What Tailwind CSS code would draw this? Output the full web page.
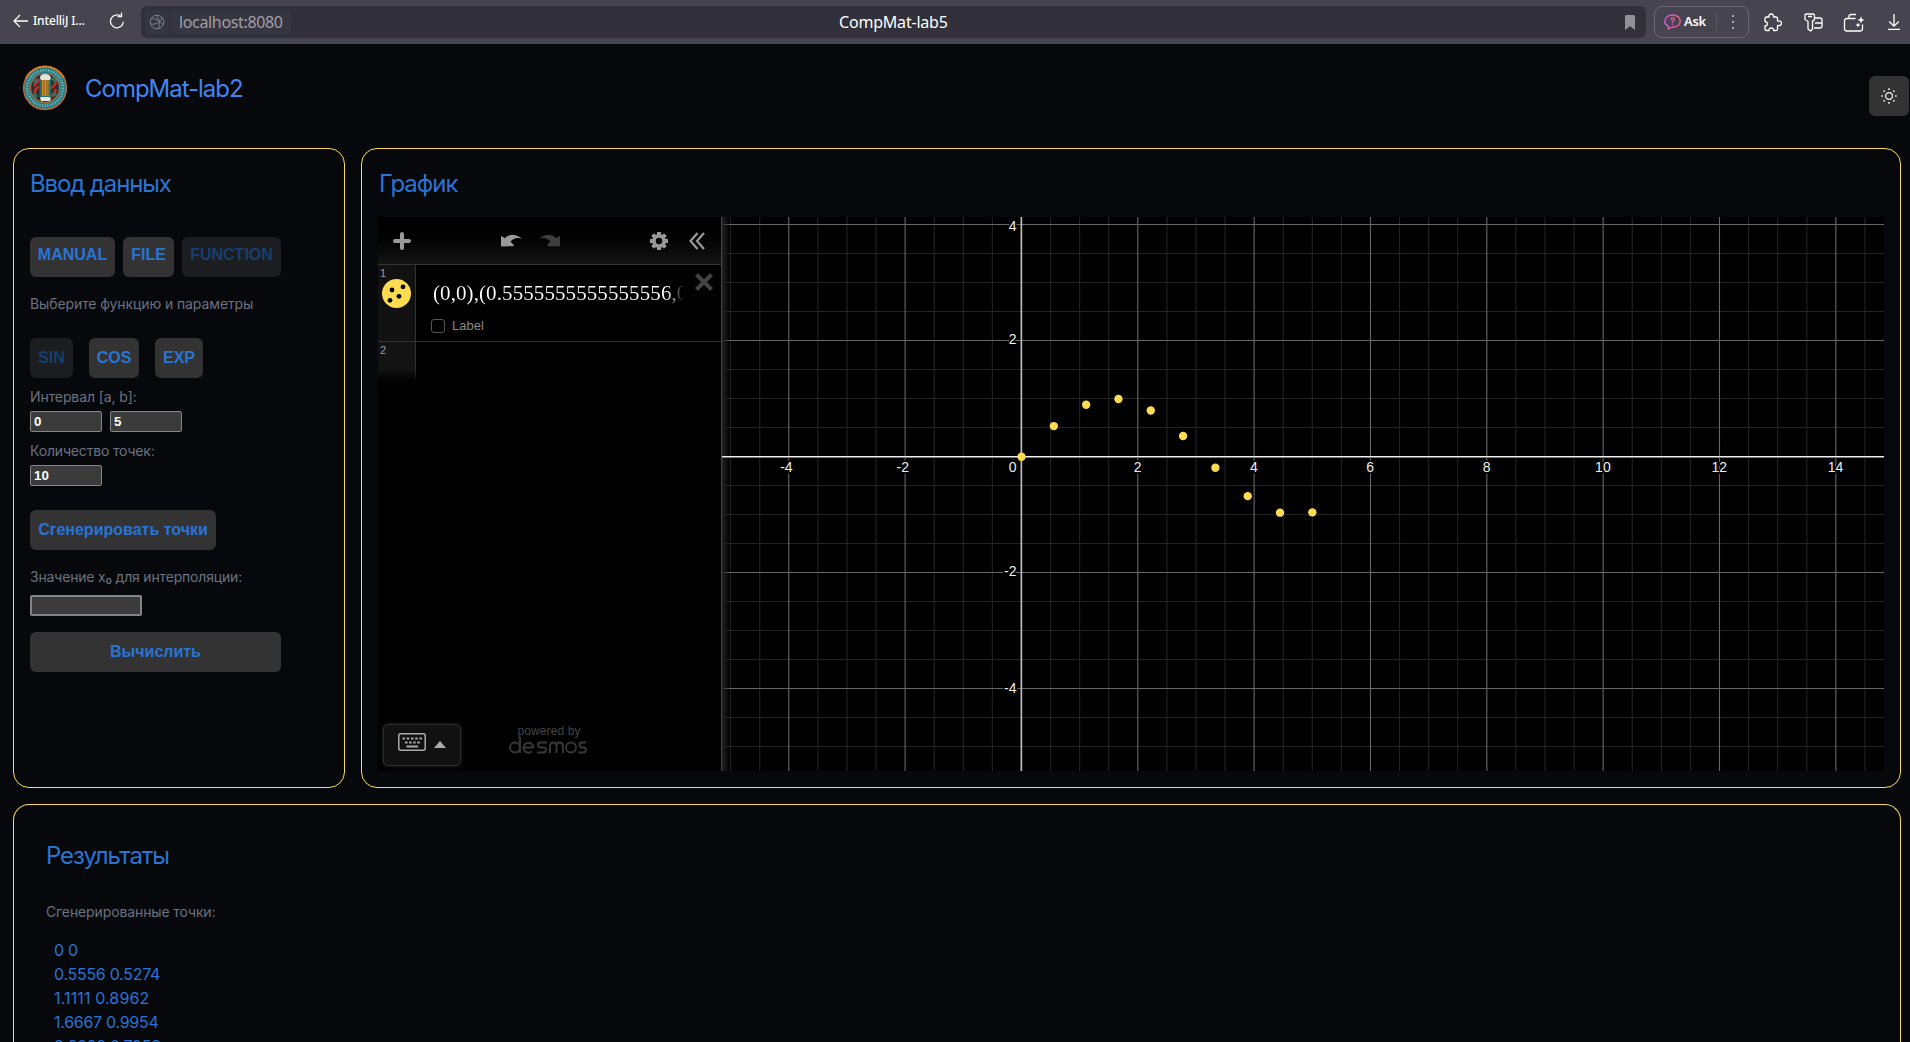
<!DOCTYPE html>
<html lang="ru">
<head>
<meta charset="utf-8">
<title>CompMat-lab5</title>
<script src="https://cdn.jsdelivr.net/npm/@tailwindcss/browser@4"></script>
</head>
<body class="h-[1042px] w-[1910px] overflow-hidden bg-[#06080c] font-['Inter',sans-serif] text-[#2a74d4]">

<!-- Browser bar -->
<div class="flex h-11 items-start bg-[#46454f] pt-1.5 font-['Noto_Sans',sans-serif] text-white">
  <div class="flex h-8 w-[141px] shrink-0 items-center">
    <svg class="ml-[13px] -mt-0.5 h-4 w-[15px] shrink-0" viewBox="0 0 15 16" fill="none" stroke="#fff" stroke-width="1.3"><path d="M15 8H1.2M7 2 1 8l6 6"/></svg>
    <span class="ml-[5px] -mt-0.5 w-[54px] whitespace-nowrap text-[12px] font-medium tracking-[-0.15px]">IntelliJ I...</span>
    <svg class="ml-[22px] -mt-1 h-[18px] w-4 shrink-0" viewBox="0 0 16 18" fill="none" stroke="#f4f4f4" stroke-width="1.3"><path d="M14.300 10.400a6.400 6.400 0 1 1-2.600-5.500M8.600 5.300h3.900V1.200" transform="translate(0,.3)"/></svg>
  </div>
  <div class="relative flex h-8 w-[1505px] shrink-0 items-center rounded-md bg-[#32313b]">
    <div class="ml-[4px] flex size-6 items-center justify-center rounded bg-[#363641]">
      <svg class="size-4" viewBox="0 0 16 16" fill="none" stroke="#84838d" stroke-width="1"><circle cx="8" cy="8" r="6.800"/><path d="M2 4.800c4-.8 8.500 1.500 12 6M1.400 9.800C6 11.500 11.500 8 13 3.500M7 1.300c3.500 3.500 4 8.500 2.500 13.200"/></svg>
    </div>
    <div class="ml-[2px] flex h-6 w-[120px] items-center rounded bg-[#363641] pl-2 text-[16px] text-[#a09fa6]"><span class="tracking-[-0.35px]">localhost:8080</span></div>
    <span class="absolute left-[698px] top-[4px] whitespace-nowrap text-[16px] leading-6 tracking-[-0.2px]">CompMat-lab5</span>
    <svg class="ml-auto mr-[11px] h-[15px] w-[10px]" viewBox="0 0 10 15" fill="#929198"><path d="M1.500 0h7Q10 0 10 1.500V15L5 11.200 0 15V1.500Q0 0 1.500 0z"/></svg>
  </div>
  <div class="ml-2 flex h-8 w-[95px] shrink-0 items-center rounded-lg border border-[#696870]">
    <svg class="ml-[9px] h-4 w-[17px]" viewBox="0 0 17 16" fill="none" stroke-width="1.4"><defs><linearGradient id="p"><stop stop-color="#d45be0"/><stop offset="1" stop-color="#f0598c"/></linearGradient></defs><path stroke="url(#p)" d="M4.300 15v-2.800C2 11 .8 9.300.8 7.200.8 3.400 4 1 8.500 1s7.700 2.400 7.700 6-3 6-7 6Q6.800 13.200 4.300 15z"/><path stroke="url(#p)" d="M6.700 5.600Q7 4 8.600 4t1.700 1.500Q10.300 6.600 8.500 7.300v1.200M8.500 9.500V11"/></svg>
    <span class="ml-[3px] w-[23px] text-[13px] font-semibold tracking-[-0.3px]">Ask</span>
    <span class="ml-[9px] h-[18px] w-px bg-[#5a5963]"></span>
    <span class="ml-[15px] flex flex-col gap-1"><i class="size-0.5 bg-[#aaa]"></i><i class="size-0.5 bg-[#aaa]"></i><i class="size-0.5 bg-[#aaa]"></i></span>
  </div>
  <div class="flex h-8 flex-1 items-center">
    <svg class="ml-[14px] h-[19px] w-5 shrink-0" viewBox="0 0 20 19" fill="none" stroke="#fff" stroke-width="1.3" stroke-linejoin="round"><path d="M2 5.500Q2 4 3.500 4H6Q5.600 1 8.200 1t2.300 3H13q1.500 0 1.500 1.500V8q4-.4 4 2.200t-4 2.300V16q0 1.500-1.500 1.500h-2.500q.2-2.500-2.200-2.500T6 17.500H3.500Q2 17.500 2 16v-3q2.300 0 2.300-2.200T2 8.600z"/></svg>
    <svg class="ml-[20px] h-[19px] w-[21px] shrink-0" viewBox="0 0 21 19" fill="none" stroke="#fff" stroke-width="1.3" stroke-linejoin="round"><path d="M3 1h7q1.500 0 1.500 1.500v3Q11.500 7.500 9.500 8v8L7.500 18 5 16V8.500L2 6.500V2.500Q2 1 3 1zM5 3.500h4M12 5h5q2 0 2 2v6q0 2-2 2h-6M12 10h7"/></svg>
    <svg class="ml-[19px] h-[19px] w-[22px] shrink-0" viewBox="0 0 22 19" fill="none" stroke="#fff" stroke-width="1.3"><path d="M12.500 5.500H4Q1.500 5.500 1.500 8v7.500Q1.500 18 4 18h13q2.500 0 2.500-2.500v-4M6 5V3.500Q6 1.500 8 1.500h5"/><path fill="#fff" stroke="none" d="M18 3.200 19 6l2.500 1L19 8l-1 2.500L17 8l-2.500-1L17 6zM15 9.500l.8 1.700 1.700.8-1.700.8L15 14.500l-.8-1.700-1.700-.8 1.700-.8z"/></svg>
    <svg class="ml-[23px] h-4 w-3 shrink-0" viewBox="0 0 12 16" fill="none" stroke="#fff" stroke-width="1.300"><path d="M6 0v12M1.200 7.500 6 12.200l4.800-4.700M0 15.300h12"/></svg>
  </div>
</div>

<!-- Page header -->
<header class="flex h-[104px] items-start">
  <svg class="ml-[22px] mt-[21px] size-[46px]" viewBox="0 0 46 46">
    <circle cx="23" cy="23" r="21.400" fill="#277f87" stroke="#b96a38" stroke-width="1.500"/>
    <path d="M4 13A21.400 21.400 0 0 1 42 13" fill="none" stroke="#de7a22" stroke-width="1.800"/>
    <circle cx="23" cy="23" r="17.800" fill="none" stroke="#7fb0ae" stroke-width="2.600" stroke-dasharray="1.200 1.500"/>
    <circle cx="23" cy="23" r="14.500" fill="#28302f" stroke="#ae6c42" stroke-width="1.200"/>
    <path d="M13 30q-1-7 4-8M12 21q4-5 6-7M33 15q2 5-4 8M34 24q-2 6-5 7" stroke="#c42b27" stroke-width="2.600" fill="none"/>
    <path d="M15 14l-3 4M30 13l4 4M15 32l-3-3M31 31l3-3" stroke="#2d746b" stroke-width="3"/>
    <rect x="17.500" y="14" width="11.500" height="19" rx="1.500" fill="#286f69"/>
    <rect x="20" y="15" width="6.500" height="16" fill="#d78b24"/>
    <path d="M22 15v16M25 15v16" stroke="#704d29" stroke-width=".8"/>
    <path d="M18 13q0-4 5-4t6 4l-1 2h-9zM18 33l1-1h8l2 1-1 3h-9z" fill="#e4e5df"/>
  </svg>
  <h1 class="ml-[17px] mt-[29px] text-[24px] leading-8 tracking-[-1.02px] text-[#4285f0]">CompMat-lab2</h1>
  <button class="ml-auto mr-px mt-8 flex size-10 items-center justify-center rounded-md bg-[#333]">
    <svg class="size-4" viewBox="0 0 16 16" fill="none" stroke="#f2f2f2" stroke-width="1.200"><circle cx="8" cy="8" r="3.400"/><path d="M8 .3v1.600M8 14.100v1.600M.3 8h1.600M14.100 8h1.600M2.600 2.600l1.100 1.100M12.300 12.300l1.100 1.100M2.600 13.400l1.100-1.100M12.300 3.700l1.100-1.100" stroke-width="1.600"/></svg>
  </button>
</header>

<main class="pl-[13px] pr-[9px]">
  <div class="flex gap-4">
    <!-- Input -->
    <section class="flex h-[640px] w-[332px] shrink-0 flex-col items-start rounded-2xl border border-[#f8dc55] px-4 pt-[19px]">
      <h2 class="text-[24px] leading-8 tracking-[-1.12px]">Ввод данных</h2>
      <div class="mt-[37px] flex gap-2 font-['Liberation_Sans',sans-serif] text-[16px] font-bold">
        <button class="h-10 w-[85px] rounded-md bg-[#333] pb-1">MANUAL</button>
        <button class="h-10 w-[51px] rounded-md bg-[#333] pb-1">FILE</button>
        <button class="h-10 w-[99px] rounded-md bg-[#1c1d20] pb-1 text-[#163f70]">FUNCTION</button>
      </div>
      <p class="mt-[15px] text-[14px] leading-6 tracking-[-0.1px] text-[#6b7280]">Выберите функцию и параметры</p>
      <div class="mt-[22px] flex gap-4 font-['Liberation_Sans',sans-serif] text-[16px] font-bold">
        <button class="h-10 w-[43px] rounded-md bg-[#1c1d20] text-[#163f70]">SIN</button>
        <button class="h-10 w-[50px] rounded-md bg-[#333]">COS</button>
        <button class="h-10 w-[48px] rounded-md bg-[#333]">EXP</button>
      </div>
      <p class="mt-[7px] text-[14px] leading-6 tracking-[-0.1px] text-[#6b7280]">Интервал [a, b]:</p>
      <div class="mt-0.5 flex gap-2 font-['Liberation_Sans',sans-serif] text-[13.333px] font-bold text-white">
        <input class="h-[21px] w-[72px] rounded-[2px] border border-[#858585] bg-[#3b3b3b] px-[3px]" value="0">
        <input class="h-[21px] w-[72px] rounded-[2px] border border-[#858585] bg-[#3b3b3b] px-[3px]" value="5">
      </div>
      <p class="mt-[7px] text-[14px] leading-6 tracking-[-0.17px] text-[#6b7280]">Количество точек:</p>
      <input class="mt-0.5 h-[21px] w-[72px] rounded-[2px] border border-[#858585] bg-[#3b3b3b] px-[3px] font-['Liberation_Sans',sans-serif] text-[13.333px] font-bold text-white" value="10">
      <button class="mt-6 h-10 w-[186px] whitespace-nowrap rounded-md bg-[#333] font-['Liberation_Sans',sans-serif] text-[16px] font-bold">Сгенерировать точки</button>
      <p class="mt-[15px] text-[14px] leading-6 tracking-[-0.18px] text-[#6b7280]">Значение x₀ для интерполяции:</p>
      <input class="mt-1.5 h-[21px] w-[112px] rounded-[2px] border-2 border-[#858585] bg-[#3b3b3b]">
      <button class="mt-4 h-10 w-[251px] rounded-md bg-[#333] font-['Liberation_Sans',sans-serif] text-[16px] font-bold">Вычислить</button>
    </section>

    <!-- Plot -->
    <section class="h-[640px] flex-1 rounded-2xl border border-[#f8dc55] px-4 pt-[19px]">
      <h2 class="pl-px text-[24px] leading-8 tracking-[-1.05px]">График</h2>
      <div class="mt-[17px] flex h-[554px] w-[1506px] bg-black font-['Liberation_Sans',sans-serif]">
        <aside class="flex w-[344px] shrink-0 flex-col border-r border-[#444]">
          <div class="flex h-12 shrink-0 items-center border-b border-[#333] bg-linear-to-b from-black to-[#161616]">
            <svg class="ml-[15px] size-[18px]" viewBox="0 0 18 18" stroke="#999" stroke-width="4" stroke-linecap="round"><path d="M9 2v14M2 9h14"/></svg>
            <svg class="ml-[90px] h-3.5 w-[21px]" viewBox="0 0 21 14" fill="#999"><path d="M0 3q0-1.500 1.300-.6L3.500 4.300Q11-3 21 4.600q-7-2.200-11.500 3l3 3.200q.7 1.200-.7 1.400L1 12.500q-1 0-1-1z"/></svg>
            <svg class="ml-[17px] h-3.5 w-[21px]" viewBox="0 0 21 14" fill="#3d3d3d"><path d="M21 3q0-1.500-1.300-.6L17.500 4.300Q10-3 0 4.600q7-2.200 11.500 3l-3 3.200q-.7 1.200.7 1.400L20 12.500q1 0 1-1z"/></svg>
            <svg class="ml-[90px] size-[18px]" viewBox="0 0 18 18" fill="none" stroke="#999"><circle cx="9" cy="9" r="5.100" stroke-width="3.800"/><path stroke-width="4" d="M9 0v3M9 15v3M0 9h3M15 9h3M2.600 2.600l2.100 2.100M13.300 13.300l2.100 2.100M2.600 15.400l2.100-2.100M13.300 4.700l2.100-2.100"/></svg>
            <svg class="ml-[21px] h-[18px] w-4" viewBox="0 0 16 18" fill="none" stroke="#999" stroke-width="2.200"><path d="M8.500 1 1.500 9l7 8M15 1 8 9l7 8"/></svg>
          </div>
          <div class="flex h-[77px] shrink-0 border-b border-[#333]">
            <div class="w-[38px] border-r border-[#333] bg-[#111] pl-0.5 text-[11px] leading-4 text-[#999]">1
              <svg class="ml-0.5 -mt-0.5 size-[29px]" viewBox="0 0 29 29"><circle cx="14.500" cy="14.500" r="14.500" fill="#fbdb50"/><g fill="#000"><circle cx="10" cy="11" r="2.400"/><circle cx="21" cy="7.800" r="2.400"/><circle cx="17" cy="17.300" r="2.400"/><circle cx="8" cy="21.300" r="2.400"/></g></svg>
            </div>
            <div class="relative flex-1 pl-[17px] pt-3.5">
              <div class="w-[254px] overflow-hidden whitespace-nowrap bg-linear-to-r from-white from-92% to-black bg-clip-text font-['Liberation_Serif',serif] text-[21px] leading-[28px] tracking-[0.09px] text-transparent">(0,0),(0.5555555555555556,0</div>
              <div class="-ml-0.5 mt-[11px] flex items-center gap-[7px] text-[13px] leading-4 text-[#888]"><span class="size-3.5 rounded-[3px] border border-[#555]"></span>Label</div>
              <svg class="absolute right-2 top-2 size-[18px]" viewBox="0 0 18 18" stroke="#444" stroke-width="4"><path d="m1.500 1.500 15 15M16.500 1.500l-15 15"/></svg>
            </div>
          </div>
          <div class="flex h-[50px] w-[38px] justify-between bg-linear-to-b from-[#131313] from-55% to-black pl-0.5 text-[11px] leading-[17px] text-[#999]">2<span class="w-px bg-linear-to-b from-[#333] from-50% to-black"></span></div>
          <div class="mb-1 ml-[5px] mt-auto flex items-start">
            <div class="mb-px flex h-[42px] w-[78px] items-center rounded-[5px] border border-[#2e2e2e] bg-[#111] shadow-[0_0_5px_#222]">
              <svg class="-mt-1.5 ml-[14px] h-[18px] w-7" viewBox="0 0 28 18"><rect x=".8" y=".8" width="26.400" height="16.400" rx="2" fill="none" stroke="#aaa" stroke-width="1.500"/><path stroke="#aaa" stroke-width="2" d="M4.500 5.500h19.500" stroke-dasharray="2.500 1.750"/><path stroke="#aaa" stroke-width="2" d="M7 9.500h15" stroke-dasharray="2.500 1.600"/><path stroke="#aaa" stroke-width="2" d="M8.500 13.500h11.500"/></svg>
              <svg class="ml-2 -mt-px h-[7px] w-3" viewBox="0 0 12 7" fill="#aaa"><path d="M6 0 12 7H0z"/></svg>
            </div>
            <div class="ml-[48px] flex w-[78px] flex-col items-center text-[12px] leading-[12px] tracking-[0.1px] text-[#444]">
              <span class="mt-px whitespace-nowrap pl-0.5">powered by</span>
              <svg class="h-[17px] w-[78px]" viewBox="0 0 78 17" fill="none" stroke="#383838" stroke-width="1.900" aria-label="desmos"><circle cx="6" cy="10.500" r="5"/><path d="M11 0v16M14.500 10.500h10A5 5 0 1 0 23 14.300M38 5.500h-6.500a2.500 2.500 0 0 0 0 5h3a2.500 2.500 0 0 1 0 5h-6.500M41 16V9q0-3.500 3.300-3.500t3.200 3.500v7M47.500 9q0-3.500 3.200-3.500T54 9v7"/><circle cx="62" cy="10.500" r="5"/><path d="M77 5.500h-4a2.500 2.500 0 0 0 0 5h1.500a2.500 2.500 0 0 1 0 5H69.500"/></svg>
            </div>
          </div>
        </aside>
        <svg id="plot" class="h-[554px] w-[1162px]" viewBox="722 217 1162 554" font-family="Liberation Sans" font-size="14" fill="#eee"></svg>
      </div>
    </section>
  </div>

  <!-- Results -->
  <section class="mt-4 h-[238px] rounded-t-2xl border border-b-0 border-[#f8dc55] px-8 pt-[35px]">
    <h2 class="text-[24px] leading-8 tracking-[-1.08px]">Результаты</h2>
    <p class="mt-[28px] text-[14px] leading-6 tracking-[-0.12px] text-[#6b7280]">Сгенерированные точки:</p>
    <ul class="mt-[14px] pl-2 text-[16px] leading-6 tracking-[-0.28px]">
      <li>0 0</li><li>0.5556 0.5274</li><li class="tracking-[0.13px]">1.1111 0.8962</li><li>1.6667 0.9954</li><li>2.2222 0.7953</li>
    </ul>
  </section>
</main>

<script>
  const U = 58.17, V = 58.03, X0 = 1021.5, Y0 = 456.7;
  let s = '<defs><linearGradient id="edge"><stop stop-color="#222"/><stop offset="1" stop-color="#222" stop-opacity="0"/></linearGradient></defs>';
  for (let pass = 0; pass < 2; pass++) {
    for (let i = -10; i <= 29; i++) {
      const major = i % 4 === 0;
      if (i && major == pass) s += `<rect x="${(X0 + i / 2 * U - .6).toFixed(2)}" y="217" width="1.1" height="554" fill="${major ? '#666' : '#232323'}"/>`;
    }
    for (let j = -10; j <= 8; j++) {
      const major = j % 4 === 0;
      if (j && major == pass) s += `<rect x="722" y="${Math.floor(Y0 - j / 2 * V)}" width="1162" height="1" fill="${major ? '#666' : '#232323'}"/>`;
    }
  }
  s += '<rect x="722" y="217" width="8" height="554" fill="url(#edge)"/>';
  s += '<rect x="1020.500" y="217" width="1.700" height="554" fill="#bbb"/><rect x="722" y="456" width="1162" height="1" fill="#eee"/><rect x="722" y="457" width="1162" height="1" fill="#777"/>';
  const halo = 'stroke="#000" stroke-width="3" paint-order="stroke"';
  for (let i = -4; i <= 14; i += 2)
    if (i) s += `<text x="${X0 + i * U - (i < 0 ? 2.400 : .3)}" y="472" text-anchor="middle" ${halo}>${i}</text>`;
  s += `<text x="1016.500" y="472" text-anchor="end" ${halo}>0</text>`;
  for (const [v, y] of [[4, 231], [2, 344], [-2, 576], [-4, 693]])
    s += `<text x="1016.500" y="${y}" text-anchor="end" ${halo}>${v}</text>`;
  for (let k = 0; k < 10; k++) {
    const x = k * 5 / 9;
    s += `<circle cx="${X0 + x * U}" cy="${Y0 - Math.sin(x) * V}" r="4.200" fill="#fbdb50"/>`;
  }
  document.getElementById('plot').innerHTML = s;
</script>
</body>
</html>
